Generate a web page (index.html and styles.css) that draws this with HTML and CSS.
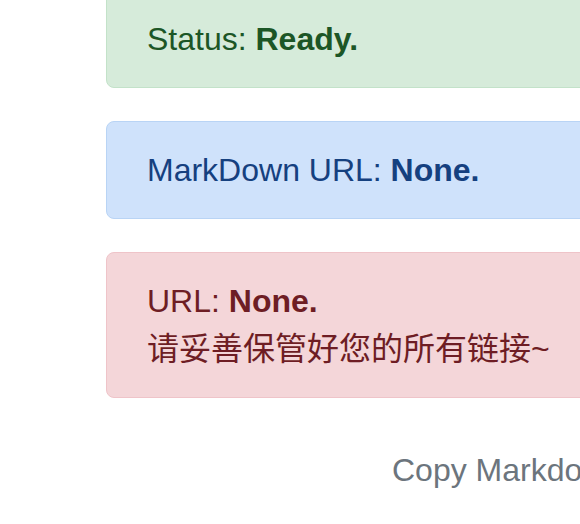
FILE: index.html
```html
<!DOCTYPE html>
<html lang="zh-CN">
<head>
<meta charset="utf-8">
<link rel="stylesheet" href="styles.css">
</head>
<body>
<div class="page">
  <div class="alert alert-success">Status: <b>Ready.</b></div>
  <div class="alert alert-primary">MarkDown URL: <b>None.</b></div>
  <div class="alert alert-danger">URL: <b>None.</b><br>请妥善保管好您的所有链接~</div>
  <div class="copy">Copy Markdown URL</div>
</div>
</body>
</html>
```
FILE: styles.css
```css
html, body {
  margin: 0;
  padding: 0;
  background: #ffffff;
  overflow: hidden;
}
.page {
  width: 640px;
  margin-left: 106px;
  margin-top: -10px;
  font-family: "Liberation Sans", "Noto Sans CJK SC", sans-serif;
  font-size: 32px;
  line-height: 48px;
}
.alert {
  padding: 24px 40px;
  border: 1px solid transparent;
  border-radius: 8px;
  margin-bottom: 33px;
  white-space: nowrap;
}
.alert b {
  font-weight: 700;
}
.alert-success {
  background: #d6ebda;
  border-color: #c3e2c9;
  color: #1c5626;
}
.alert-primary {
  background: #cfe2fb;
  border-color: #b9d4f5;
  color: #15407f;
}
.alert-danger {
  background: #f4d6d9;
  border-color: #efc4c9;
  color: #6e1d24;
}
.copy {
  padding-top: 15px;
  padding-left: 286px;
  color: #6c757d;
  white-space: nowrap;
}
```
